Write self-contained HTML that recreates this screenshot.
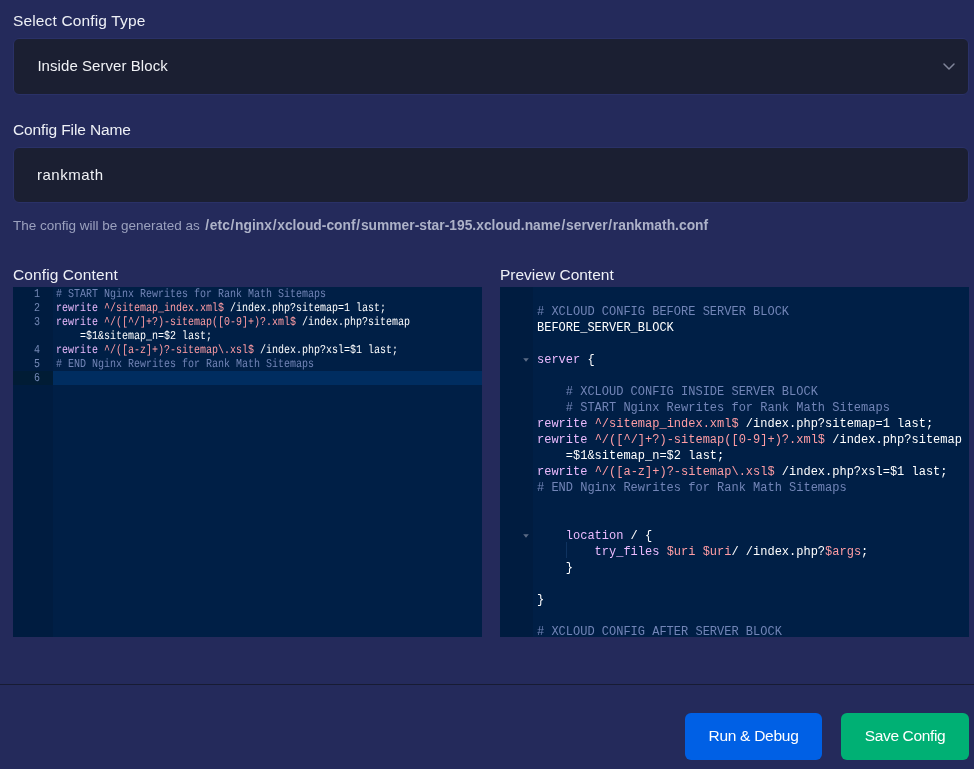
<!DOCTYPE html>
<html>
<head>
<meta charset="utf-8">
<style>
*{box-sizing:border-box;margin:0;padding:0}
html,body{width:974px;height:769px;overflow:hidden;background:#242a5b;font-family:"Liberation Sans",sans-serif;color:#eceef5}
.abs{position:absolute}
.lbl{position:absolute;left:13px;font-size:15.5px;letter-spacing:0.15px;color:#eef0f6;white-space:nowrap;line-height:20px}
.field{position:absolute;left:13px;width:956px;height:56px;background:#1b1f32;border:1px solid #2a3167;border-radius:6px}
.field span{position:absolute;left:23px;top:17px;font-size:15px;letter-spacing:0.12px;line-height:20px;color:#f1f2f6;white-space:nowrap}
.info{position:absolute;left:13px;top:217px;font-size:13.5px;line-height:18px;color:#9ba1be;white-space:nowrap}
.info b{color:#adb2c8;font-weight:bold;font-size:13.8px;letter-spacing:0.02px;margin-left:1px}.info i{font-style:normal;margin:0 0.7px}
.ed{position:absolute;top:287px;width:469px;height:350px;background:#001f46;overflow:hidden;font-family:"Liberation Mono",monospace;color:#fff}
.gut{position:absolute;left:0;top:0;bottom:0;background:#001c40}
.ln{position:absolute;white-space:pre}
.k{color:#ebbbff}.r{color:#ff9da4}.c{color:#7285b7}.g{color:#7388b5}
#e1 .ln{font-size:12px;line-height:14px;height:14px;left:43px;text-rendering:geometricPrecision;transform:scaleX(0.83333);transform-origin:0 0}
#e1 .n{left:0;width:27px;text-align:right;color:#7388b5;transform-origin:100% 0}
#e2 .ln{font-size:12px;line-height:16px;height:16px;left:37px;margin-top:2px}
.btn{position:absolute;top:713px;height:47px;border-radius:6px;color:#fff;font-size:15.5px;line-height:45px;text-align:center;white-space:nowrap}
</style>
</head>
<body><div id="root" style="position:absolute;left:0;top:0;width:974px;height:769px;will-change:transform">
<div class="lbl" style="top:11px">Select Config Type</div>
<div class="field" style="top:38px;height:57px"><span style="letter-spacing:0.06px;left:23.4px">Inside Server Block</span>
<svg class="abs" style="left:928px;top:23px" width="14" height="10" viewBox="0 0 14 10"><path d="M2 2 L7 7 L12 2" fill="none" stroke="#80859a" stroke-width="1.5" stroke-linecap="round" stroke-linejoin="round"/></svg>
</div>
<div class="lbl" style="top:120px;letter-spacing:-0.12px">Config File Name</div>
<div class="field" style="top:147px"><span style="letter-spacing:0.5px">rankmath</span></div>
<div class="info">The config will be generated as <b><i>/</i>etc<i>/</i>nginx<i>/</i>xcloud-conf<i>/</i>summer-star-195.xcloud.name<i>/</i>server<i>/</i>rankmath.conf</b></div>

<div class="lbl" style="top:265px;letter-spacing:0.1px">Config Content</div>
<div class="lbl" style="top:265px;left:500px;letter-spacing:0">Preview Content</div>

<div class="ed" id="e1" style="left:13px">
<div class="gut" style="width:40px"></div>
<div class="abs" style="left:0;top:84px;width:40px;height:14px;background:#011c35"></div>
<div class="abs" style="left:40px;top:84px;right:0;height:14px;background:#002d60"></div>
<div class="ln n" style="top:0">1</div>
<div class="ln n" style="top:14px">2</div>
<div class="ln n" style="top:28px">3</div>
<div class="ln n" style="top:56px">4</div>
<div class="ln n" style="top:70px">5</div>
<div class="ln n" style="top:84px">6</div>
<div class="ln c" style="top:0"># START Nginx Rewrites for Rank Math Sitemaps</div>
<div class="ln" style="top:14px"><span class="k">rewrite</span> <span class="r">^/sitemap_index.xml$</span> /index.php?sitemap=1 last;</div>
<div class="ln" style="top:28px"><span class="k">rewrite</span> <span class="r">^/([^/]+?)-sitemap([0-9]+)?.xml$</span> /index.php?sitemap</div>
<div class="ln" style="top:42px">    =$1&amp;sitemap_n=$2 last;</div>
<div class="ln" style="top:56px"><span class="k">rewrite</span> <span class="r">^/([a-z]+)?-sitemap\.xsl$</span> /index.php?xsl=$1 last;</div>
<div class="ln c" style="top:70px"># END Nginx Rewrites for Rank Math Sitemaps</div>
</div>

<div class="ed" id="e2" style="left:500px">
<div class="gut" style="width:33px"></div>
<div class="abs" style="left:66px;top:255px;width:1px;height:16px;background:#0f3360"></div>
<div class="ln c" style="top:15px"># XCLOUD CONFIG BEFORE SERVER BLOCK</div>
<div class="ln" style="top:31px">BEFORE_SERVER_BLOCK</div>
<div class="ln" style="top:63px"><span class="k">server</span> {</div>
<div class="ln c" style="top:95px">    # XCLOUD CONFIG INSIDE SERVER BLOCK</div>
<div class="ln c" style="top:111px">    # START Nginx Rewrites for Rank Math Sitemaps</div>
<div class="ln" style="top:127px"><span class="k">rewrite</span> <span class="r">^/sitemap_index.xml$</span> /index.php?sitemap=1 last;</div>
<div class="ln" style="top:143px"><span class="k">rewrite</span> <span class="r">^/([^/]+?)-sitemap([0-9]+)?.xml$</span> /index.php?sitemap</div>
<div class="ln" style="top:159px">    =$1&amp;sitemap_n=$2 last;</div>
<div class="ln" style="top:175px"><span class="k">rewrite</span> <span class="r">^/([a-z]+)?-sitemap\.xsl$</span> /index.php?xsl=$1 last;</div>
<div class="ln c" style="top:191px"># END Nginx Rewrites for Rank Math Sitemaps</div>
<div class="ln" style="top:239px">    <span class="k">location</span> / {</div>
<div class="ln" style="top:255px">        <span class="k">try_files</span> <span class="r">$uri</span> <span class="r">$uri</span>/ /index.php?<span class="r">$args</span>;</div>
<div class="ln" style="top:271px">    }</div>
<div class="ln" style="top:303px">}</div>
<div class="ln c" style="top:335px"># XCLOUD CONFIG AFTER SERVER BLOCK</div>
<svg class="abs" style="left:23.1px;top:70.5px" width="6" height="4" viewBox="0 0 6 4"><path d="M0.2 0.3 L5.8 0.3 L3 3.8 Z" fill="#5b6b86"/></svg>
<svg class="abs" style="left:23.1px;top:246.5px" width="6" height="4" viewBox="0 0 6 4"><path d="M0.2 0.3 L5.8 0.3 L3 3.8 Z" fill="#5b6b86"/></svg>
</div>

<div class="abs" style="left:0;top:684px;width:974px;height:1px;background:#171b33"></div>
<div class="btn" style="left:685px;width:137px;background:#0060e5;letter-spacing:-0.28px">Run &amp; Debug</div>
<div class="btn" style="left:841px;width:128px;background:#00b074;letter-spacing:-0.36px">Save Config</div>
</div></body>
</html>
